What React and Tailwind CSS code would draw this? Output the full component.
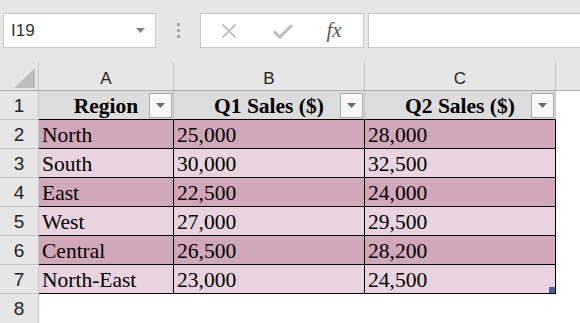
const rows = [
  ["North", "25,000", "28,000"],
  ["South", "30,000", "32,500"],
  ["East", "22,500", "24,000"],
  ["West", "27,000", "29,500"],
  ["Central", "26,500", "28,200"],
  ["North-East", "23,000", "24,500"],
];

const FilterButton = () => (
  <div className="absolute right-[1px] top-[2px] w-[23px] h-[25px] bg-[#f7f7f7] border border-[#a9a9a9] flex items-center justify-center">
    <svg width="9" height="5" viewBox="0 0 9 5">
      <path d="M0 0 L9 0 L4.5 5 Z" fill="#6b6b6b" />
    </svg>
  </div>
);

const App = () => {
  const sans = { fontFamily: '"Liberation Sans", Arial, sans-serif' };
  const serif = { fontFamily: '"Liberation Serif", "Times New Roman", serif' };

  return (
    <div className="w-[580px] h-[323px] overflow-hidden bg-white" style={sans}>
      {/* formula bar */}
      <div className="h-[62px] bg-[#e6e6e6] flex items-start pt-[13px]">
        <div className="ml-[3px] w-[153px] h-[35px] bg-white border border-[#c6c6c6] flex items-center justify-between pl-[7px] pr-[10px]">
          <span className="text-[17px] text-[#333]">I19</span>
          <svg width="9" height="5" viewBox="0 0 9 5">
            <path d="M0 0 L9 0 L4.5 5 Z" fill="#808080" />
          </svg>
        </div>
        <div className="w-[44px] h-[35px] flex flex-col items-center justify-center gap-[3px]">
          <div className="w-[3px] h-[3px] bg-[#a6a6a6]" />
          <div className="w-[3px] h-[3px] bg-[#a6a6a6]" />
          <div className="w-[3px] h-[3px] bg-[#a6a6a6]" />
        </div>
        <div className="w-[164px] h-[35px] bg-white border border-[#c6c6c6] flex items-center">
          <div className="w-[55px] flex justify-center">
            <svg width="16" height="16" viewBox="0 0 16 16">
              <path d="M1.5 1.5 L14.5 14.5 M14.5 1.5 L1.5 14.5" stroke="#b3b3b3" strokeWidth="1.6" />
            </svg>
          </div>
          <div className="w-[53px] flex justify-center">
            <svg width="20" height="16" viewBox="0 0 20 16">
              <path d="M1 8.5 L7 14 L19 2" stroke="#bdbdbd" strokeWidth="3" fill="none" />
            </svg>
          </div>
          <div className="w-[50px] flex justify-center">
            <span className="text-[21px] italic text-[#5a5a5a] leading-none" style={serif}>fx</span>
          </div>
        </div>
        <div className="ml-[4px] flex-1 h-[35px] bg-white border border-[#c6c6c6] border-r-0" />
      </div>

      {/* column headers */}
      <div className="flex h-[29px] bg-[#e6e6e6] border-b border-[#ababab]">
        <div className="w-[39px] border-r border-[#c3c3c3] relative">
          <svg className="absolute left-[14px] top-[6px]" width="21" height="20" viewBox="0 0 21 20">
            <path d="M21 0 L21 20 L0 20 Z" fill="#bcbcbc" />
          </svg>
        </div>
        {["A", "B", "C"].map((c, i) => (
          <div
            key={c}
            className={`${i === 0 ? "w-[135px]" : "w-[191px]"} border-r border-[#c3c3c3] flex items-center justify-center text-[17px] text-[#222] pt-[5px]`}
          >
            {c}
          </div>
        ))}
        <div className="flex-1" />
      </div>

      {/* row 1 (table header) */}
      <div className="flex h-[29px]">
        <div className="w-[39px] bg-[#e6e6e6] border-r border-b border-[#c3c3c3] flex items-center justify-center text-[19px] text-[#222] pt-[2px]">
          1
        </div>
        {["Region", "Q1 Sales ($)", "Q2 Sales ($)"].map((h, i) => (
          <div
            key={h}
            className={`${i === 0 ? "w-[135px]" : "w-[191px]"} relative bg-[#dcdcdc] border-r border-[#c0c0c0] border-b border-b-black flex items-center justify-center font-bold text-[21.5px] text-black pt-[3px]`}
            style={serif}
          >
            {h}
            <FilterButton />
          </div>
        ))}
        <div className="flex-1" />
      </div>

      {/* data rows */}
      {rows.map((r, idx) => (
        <div key={idx} className="flex h-[29px]">
          <div className="w-[39px] bg-[#e6e6e6] border-r border-b border-[#c3c3c3] flex items-center justify-center text-[19px] text-[#222] pt-[2px]">
            {idx + 2}
          </div>
          {r.map((v, i) => (
            <div
              key={i}
              className={`${i === 0 ? "w-[135px]" : "w-[191px]"} relative ${idx % 2 === 0 ? "bg-[#d1a8b9]" : "bg-[#e8d3df]"} border-r border-b border-black flex items-center pl-[3px] pt-[3px] text-[21.5px] text-black`}
              style={serif}
            >
              {v}
              {idx === rows.length - 1 && i === 2 && (
                <div className="absolute right-0 bottom-0 w-[6px] h-[6px] bg-[#4a5ea8]" />
              )}
            </div>
          ))}
          <div className="flex-1" />
        </div>
      ))}

      {/* row 8 */}
      <div className="flex h-[29px]">
        <div className="w-[39px] bg-[#e6e6e6] border-r border-[#c3c3c3] flex items-center justify-center text-[19px] text-[#222] pt-[2px]">
          8
        </div>
        <div className="flex-1" />
      </div>
    </div>
  );
};

export default App;
